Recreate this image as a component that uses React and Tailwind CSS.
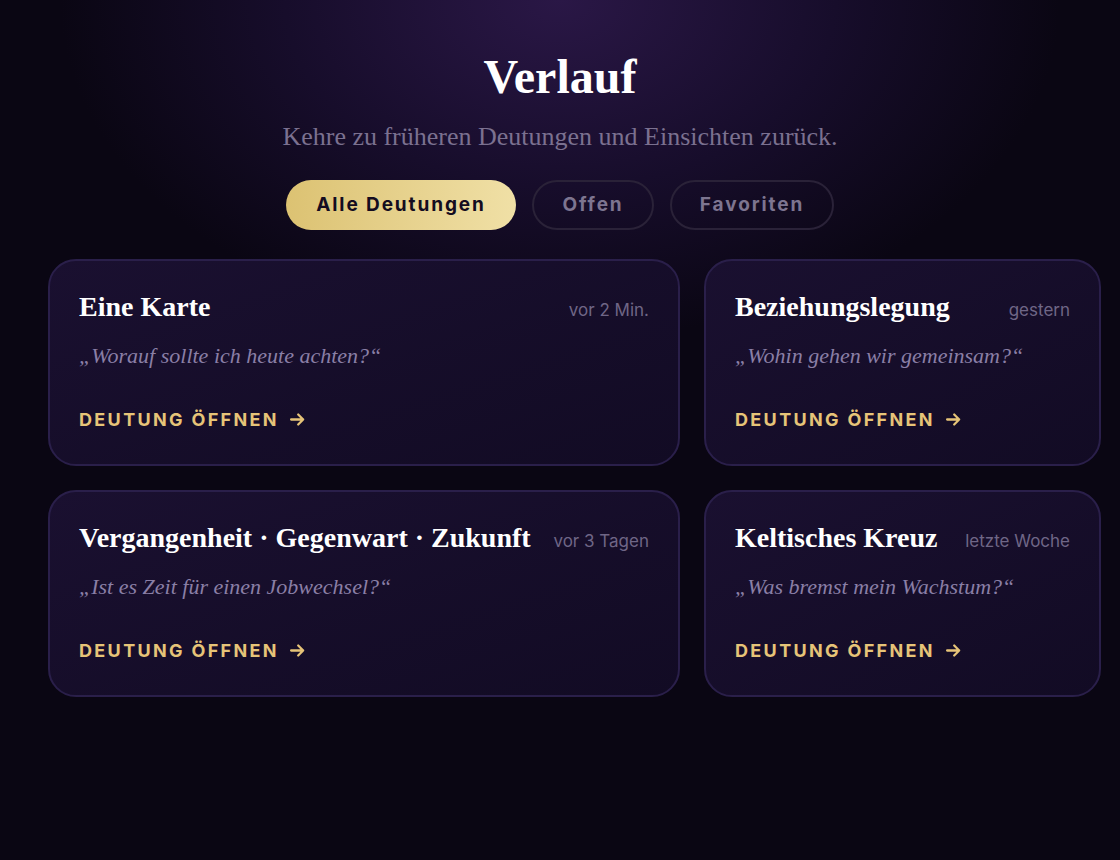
import React from 'react';

const readings = [
  { title: 'Eine Karte', time: 'vor 2 Min.', question: '„Worauf sollte ich heute achten?“' },
  { title: 'Beziehungslegung', time: 'gestern', question: '„Wohin gehen wir gemeinsam?“' },
  { title: 'Vergangenheit · Gegenwart · Zukunft', time: 'vor 3 Tagen', question: '„Ist es Zeit für einen Jobwechsel?“' },
  { title: 'Keltisches Kreuz', time: 'letzte Woche', question: '„Was bremst mein Wachstum?“' },
];

const serif = "font-['Liberation_Serif','DejaVu_Serif',serif]";
const sans = "font-['Inter','Roboto',sans-serif]";

const ReadingCard = ({ title, time, question }) => {
  return (
    <div className="h-[207px] rounded-[28px] border-2 border-[#2a1f4a] bg-gradient-to-br from-[#1a1030] to-[#120b24] px-[29px] pt-[28px]">
      <div className="flex items-baseline justify-between gap-4">
        <h3 className={`${serif} text-[28px] font-bold leading-[36px] text-white whitespace-nowrap`}>{title}</h3>
        <span className={`${sans} text-[17px] text-[#6f6686] whitespace-nowrap`}>{time}</span>
      </div>
      <p className={`${serif} mt-[14px] text-[22px] italic text-[#8a7fa6]`}>{question}</p>
      <a className={`${sans} mt-[34px] inline-flex items-center gap-[10px] text-[18px] font-bold tracking-[0.13em] text-[#e6c478]`}>
        DEUTUNG ÖFFNEN
        <svg width="17" height="17" viewBox="0 0 24 24" fill="none" stroke="currentColor" strokeWidth="3.2" strokeLinecap="round" strokeLinejoin="round">
          <path d="M3 12h17M13 5l7 7-7 7" />
        </svg>
      </a>
    </div>
  );
};

const App = () => {
  return (
    <div className="min-h-[860px] w-full bg-[#0a0613] bg-[radial-gradient(ellipse_500px_340px_at_50%_0%,#2a1746_0%,#170d2b_55%,#0a0613_100%)] pt-[50px]">
      <h1 className={`${serif} text-center text-[48px] font-bold leading-[54px] text-white`}>Verlauf</h1>
      <p className={`${serif} mt-[15px] text-center text-[26px] leading-[36px] text-[#7b7190]`}>
        Kehre zu früheren Deutungen und Einsichten zurück.
      </p>
      <div className="mt-[25px] flex justify-center gap-4">
        <button className={`${sans} h-[50px] w-[230px] rounded-full bg-gradient-to-r from-[#dcc272] to-[#f0e0a6] text-[19px] font-bold tracking-[0.1em] text-[#140c20]`}>
          Alle Deutungen
        </button>
        <button className={`${sans} h-[50px] w-[122px] rounded-full border-2 border-[#2a2238] text-[19px] font-bold tracking-[0.1em] text-[#7d7590]`}>
          Offen
        </button>
        <button className={`${sans} h-[50px] w-[164px] rounded-full border-2 border-[#2a2238] text-[19px] font-bold tracking-[0.1em] text-[#7d7590]`}>
          Favoriten
        </button>
      </div>
      <div className="mt-[29px] grid grid-cols-[632px_397px] gap-6 pl-[48px]">
        {readings.map((r) => (
          <ReadingCard key={r.title} {...r} />
        ))}
      </div>
    </div>
  );
};

export default App;
